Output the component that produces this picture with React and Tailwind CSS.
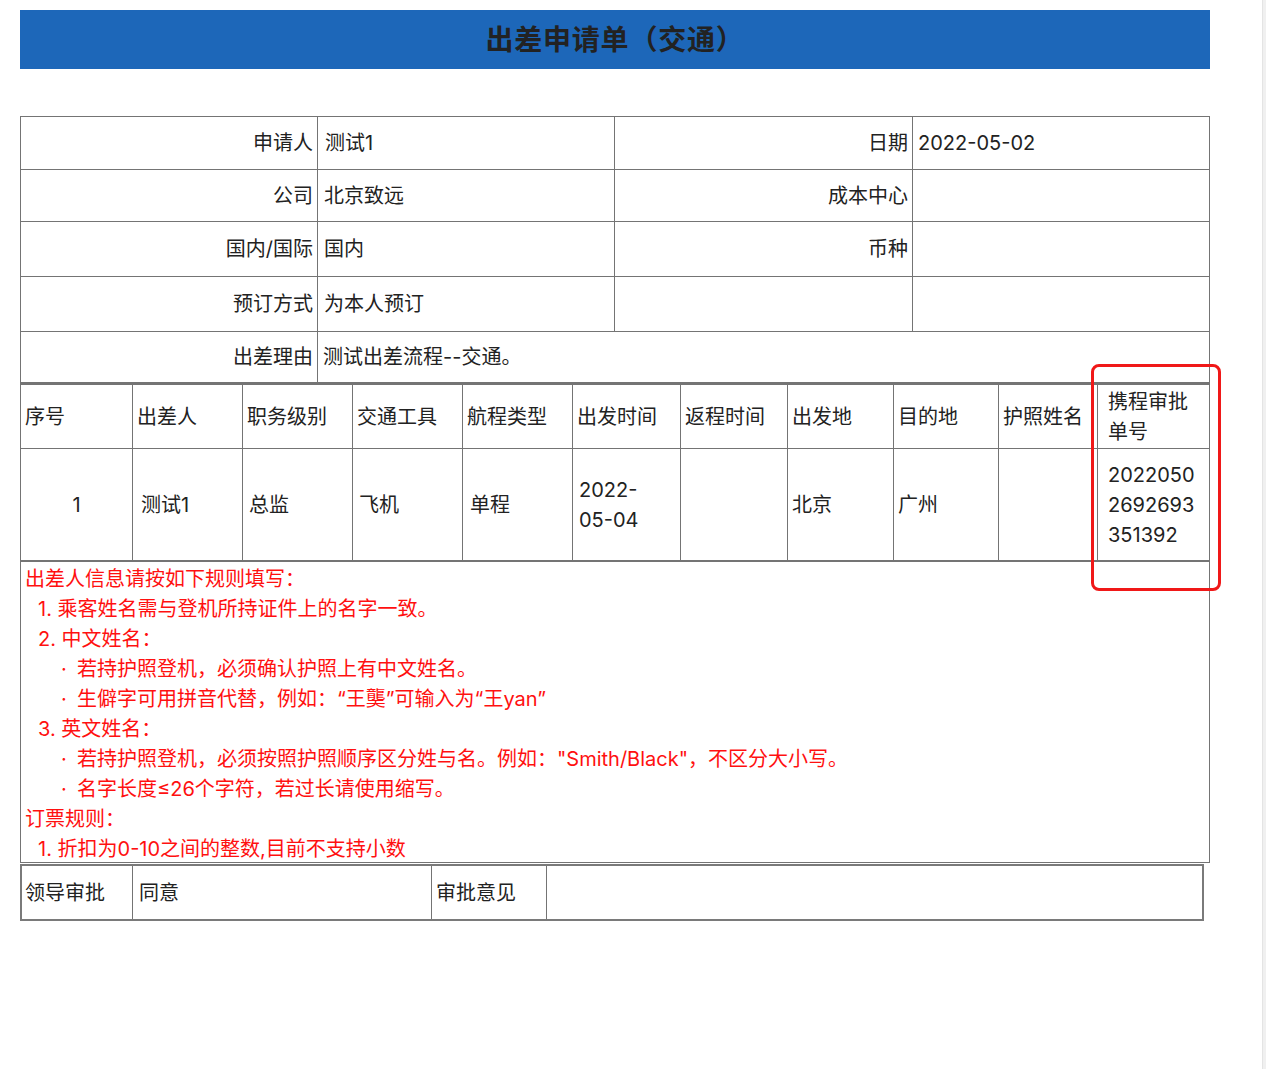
import React from "react";

const B = "border-[#747474]";

export default function App() {
  const font = { fontFamily: 'Inter, "Noto Sans CJK SC", sans-serif' };
  const labelR = `flex items-center justify-end pr-[4px] border-r ${B}`;
  const valL = `flex items-center pl-[6px] border-r ${B}`;
  const th = `flex items-center pl-[4px] border-r ${B}`;
  const td = `flex items-center border-r ${B}`;
  const widths = ["w-[112px]", "w-[110px]", "w-[110px]", "w-[110px]", "w-[110px]", "w-[108px]", "w-[107px]", "w-[106px]", "w-[105px]", "w-[99px]"];
  const headers = ["序号", "出差人", "职务级别", "交通工具", "航程类型", "出发时间", "返程时间", "出发地", "目的地", "护照姓名"];
  return (
    <div className="relative flex min-h-[1069px] bg-white text-[20px] leading-[30px] text-[#222]" style={font}>
      <div className="w-[1262px] pl-[20px] pt-[10px]">
        <div className="w-[1190px] h-[59px] bg-[#1d67b9] flex items-center justify-center">
          <span className="text-[28px] font-bold text-[#222] tracking-[0.8px]">出差申请单（交通）</span>
        </div>

        <div className={`mt-[47px] w-[1190px] border-l border-r border-t border-b ${B}`}>
          <div className={`flex h-[53px] border-b ${B}`}>
            <div className={`w-[297px] ${labelR}`}>申请人</div>
            <div className={`w-[297px] ${valL} pl-[7px]`}>测试1</div>
            <div className={`w-[298px] ${labelR}`}>日期</div>
            <div className="flex-1 flex items-center pl-[5px]">2022-05-02</div>
          </div>
          <div className={`flex h-[52px] border-b ${B}`}>
            <div className={`w-[297px] ${labelR}`}>公司</div>
            <div className={`w-[297px] ${valL} pl-[5px]`}>北京致远</div>
            <div className={`w-[298px] ${labelR}`}>成本中心</div>
            <div className="flex-1"></div>
          </div>
          <div className={`flex h-[55px] border-b ${B}`}>
            <div className={`w-[297px] ${labelR}`}>国内/国际</div>
            <div className={`w-[297px] ${valL} pl-[5px]`}>国内</div>
            <div className={`w-[298px] ${labelR}`}>币种</div>
            <div className="flex-1"></div>
          </div>
          <div className={`flex h-[55px] border-b ${B}`}>
            <div className={`w-[297px] ${labelR}`}>预订方式</div>
            <div className={`w-[297px] ${valL} pl-[5px]`}>为本人预订</div>
            <div className={`w-[298px] border-r ${B}`}></div>
            <div className="flex-1"></div>
          </div>
          <div className={`flex h-[53px] border-b-[3px] ${B}`}>
            <div className={`w-[297px] ${labelR}`}>出差理由</div>
            <div className="flex-1 flex items-center pl-[5px]">测试出差流程--交通。</div>
          </div>

          <div className={`flex h-[64px] border-b ${B}`}>
            {headers.map((t, i) => (
              <div key={i} className={`${widths[i]} ${th}`}>{t}</div>
            ))}
            <div className="flex-1 flex items-center pl-[10px]">携程审批<br />单号</div>
          </div>
          <div className={`flex h-[113px] border-b-[2px] ${B}`}>
            <div className={`${widths[0]} ${td} justify-center`}>1</div>
            <div className={`${widths[1]} ${td} pl-[8px]`}>测试1</div>
            <div className={`${widths[2]} ${td} pl-[6px]`}>总监</div>
            <div className={`${widths[3]} ${td} pl-[6px]`}>飞机</div>
            <div className={`${widths[4]} ${td} pl-[7px]`}>单程</div>
            <div className={`${widths[5]} ${td} pl-[6px]`}>2022-<br />05-04</div>
            <div className={`${widths[6]} ${td}`}></div>
            <div className={`${widths[7]} ${td} pl-[4px]`}>北京</div>
            <div className={`${widths[8]} ${td} pl-[4px]`}>广州</div>
            <div className={`${widths[9]} ${td}`}></div>
            <div className="flex-1 flex items-center pl-[10px]">2022050<br />2692693<br />351392</div>
          </div>

          <div className="text-[#ff1010] pt-[2px] h-[300px]">
            <div className="pl-[4px]">出差人信息请按如下规则填写：</div>
            <div className="pl-[17px]">1. 乘客姓名需与登机所持证件上的名字一致。</div>
            <div className="pl-[17px]">2. 中文姓名：</div>
            <div className="pl-[40px] flex"><span className="w-[16px]">·</span><span>若持护照登机，必须确认护照上有中文姓名。</span></div>
            <div className="pl-[40px] flex"><span className="w-[16px]">·</span><span>生僻字可用拼音代替，例如：“王龑”可输入为“王yan”</span></div>
            <div className="pl-[17px]">3. 英文姓名：</div>
            <div className="pl-[40px] flex"><span className="w-[16px]">·</span><span>若持护照登机，必须按照护照顺序区分姓与名。例如：&quot;Smith/Black&quot;，不区分大小写。</span></div>
            <div className="pl-[40px] flex"><span className="w-[16px]">·</span><span>名字长度≤26个字符，若过长请使用缩写。</span></div>
            <div className="pl-[4px]">订票规则：</div>
            <div className="pl-[17px] h-[28px]">1. 折扣为0-10之间的整数,目前不支持小数</div>
          </div>
        </div>

        <div className={`mt-[1px] w-[1184px] h-[57px] flex border-2 border-[#7a7a7a]`}>
          <div className={`w-[111px] flex items-center pl-[3px] border-r ${B}`}>领导审批</div>
          <div className={`w-[299px] flex items-center pl-[6px] border-r ${B}`}>同意</div>
          <div className={`w-[115px] flex items-center pl-[4px] border-r ${B}`}>审批意见</div>
          <div className="flex-1"></div>
        </div>
      </div>
      <div className="w-[4px] bg-[#f0f0f0] border-l border-[#e4e4e4]"></div>

      <div className="absolute left-[1091px] top-[364px] w-[130px] h-[227px] border-[3px] border-[#f01818] rounded-[8px]"></div>
    </div>
  );
}
